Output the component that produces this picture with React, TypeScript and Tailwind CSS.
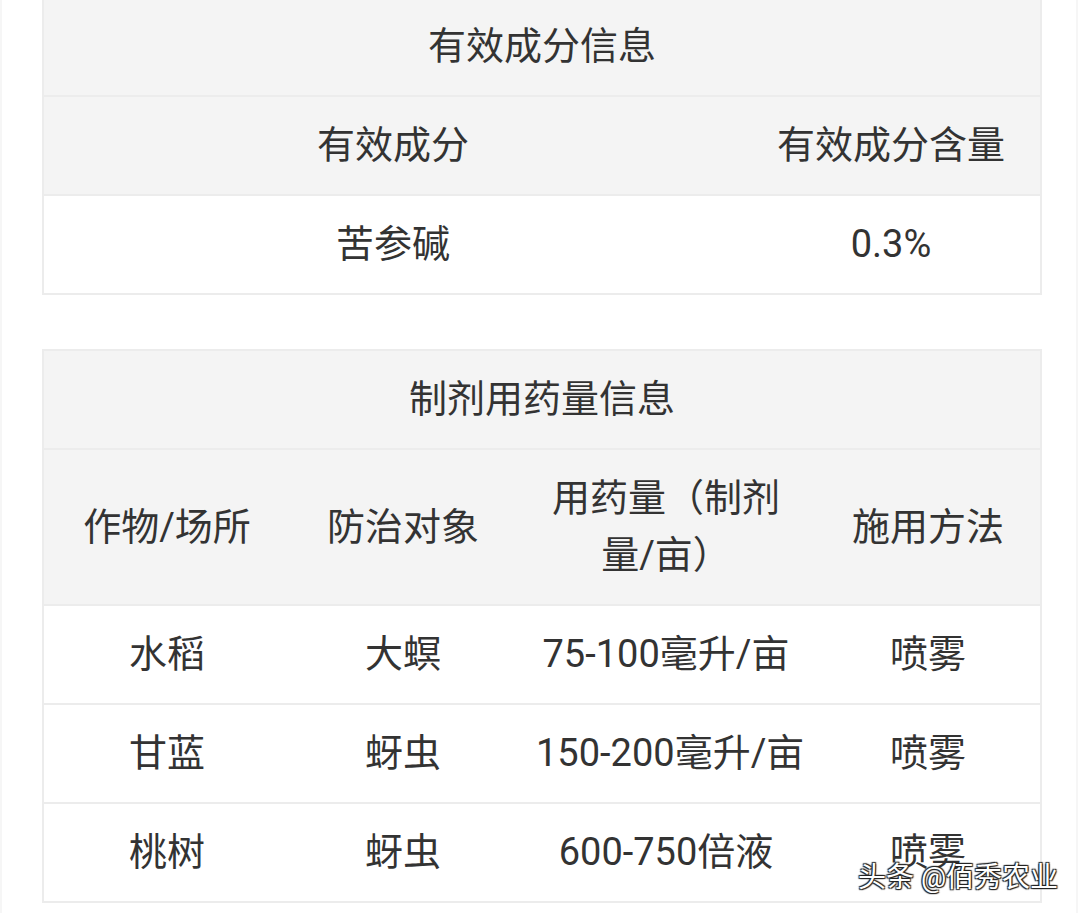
const font = "font-['Roboto','Noto_Sans_CJK_SC',sans-serif]";

const cell = "px-[20px] py-[20px] text-center font-normal leading-[57px] align-middle";

const usage = [
  { crop: "水稻", target: "大螟", dose: "75-100毫升/亩", method: "喷雾" },
  { crop: "甘蓝", target: "蚜虫", dose: "150-200毫升/亩", method: "喷雾" },
  { crop: "桃树", target: "蚜虫", dose: "600-750倍液", method: "喷雾" },
];

export default function App() {
  return (
    <div className={`relative h-[917px] w-[1080px] overflow-hidden bg-white text-[38px] text-[#333] ${font}`}>
      <div className="h-full w-[1078px] border-x-2 border-[#f6f6f6] pl-[40px]">
        {/* 有效成分 */}
        <table className="-mt-[4px] w-[1000px] table-fixed border-separate border-spacing-0 border-2 border-[#ececec]">
          <colgroup>
            <col className="w-[698px]" />
            <col className="w-[298px]" />
          </colgroup>
          <thead>
            <tr className="bg-[#f4f4f4]">
              <th colSpan={2} className={cell}>
                有效成分信息
              </th>
            </tr>
            <tr className="bg-[#f4f4f4]">
              <th className={`${cell} border-t-2 border-[#ececec]`}>有效成分</th>
              <th className={`${cell} border-t-2 border-[#ececec]`}>有效成分含量</th>
            </tr>
          </thead>
          <tbody>
            <tr>
              <td className={`${cell} border-t-2 border-[#ececec]`}>苦参碱</td>
              <td className={`${cell} border-t-2 border-[#ececec]`}>0.3%</td>
            </tr>
          </tbody>
        </table>

        {/* 制剂用药量 */}
        <table className="mt-[54px] w-[1000px] table-fixed border-separate border-spacing-0 border-2 border-[#ececec]">
          <colgroup>
            <col className="w-[246px]" />
            <col className="w-[226px]" />
            <col className="w-[300px]" />
            <col className="w-[224px]" />
          </colgroup>
          <thead>
            <tr className="bg-[#f4f4f4]">
              <th colSpan={4} className={cell}>
                制剂用药量信息
              </th>
            </tr>
            <tr className="bg-[#f4f4f4]">
              <th className={`${cell} border-t-2 border-[#ececec]`}>作物/场所</th>
              <th className={`${cell} border-t-2 border-[#ececec]`}>防治对象</th>
              <th className={`${cell} border-t-2 border-[#ececec]`}>用药量（制剂量/亩）</th>
              <th className={`${cell} border-t-2 border-[#ececec]`}>施用方法</th>
            </tr>
          </thead>
          <tbody>
            {usage.map((r) => (
              <tr key={r.crop}>
                <td className={`${cell} border-t-2 border-[#ececec]`}>{r.crop}</td>
                <td className={`${cell} border-t-2 border-[#ececec]`}>{r.target}</td>
                <td className={`${cell} whitespace-nowrap border-t-2 border-[#ececec]`}>{r.dose}</td>
                <td className={`${cell} border-t-2 border-[#ececec]`}>{r.method}</td>
              </tr>
            ))}
          </tbody>
        </table>
      </div>

      {/* 水印 */}
      <div className="absolute left-[858px] top-[858px] text-[28px] leading-[40px] text-white [text-shadow:1px_1px_1px_#222,-1px_-1px_1px_#222,1px_-1px_1px_#222,-1px_1px_1px_#222]">
        头条 @佰秀农业
      </div>
    </div>
  );
}
